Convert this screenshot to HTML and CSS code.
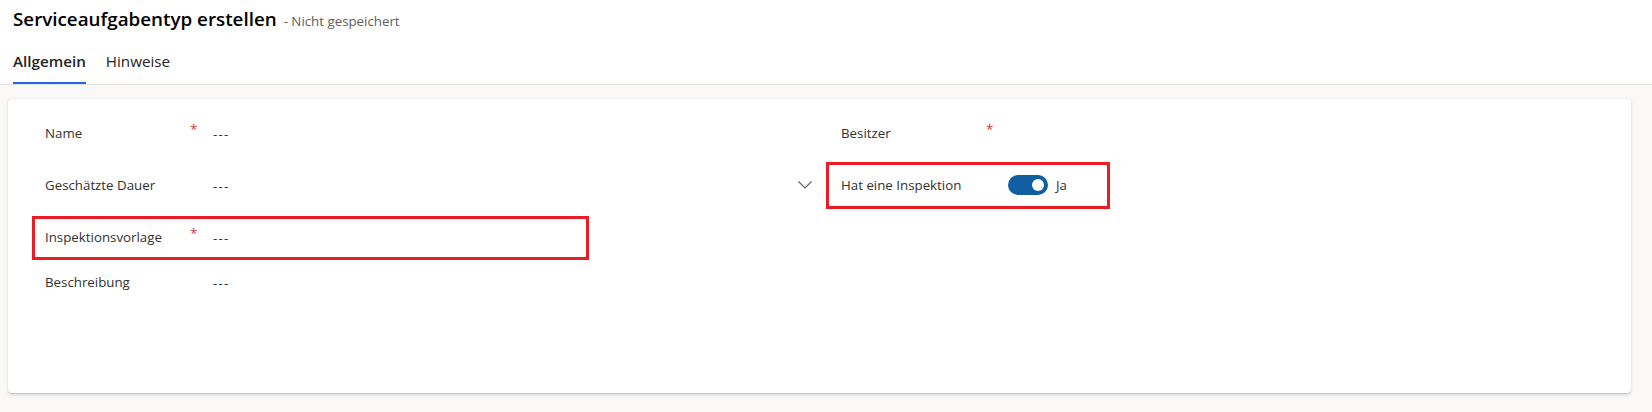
FILE: index.html
```html
<!DOCTYPE html>
<html lang="de">
<head>
<meta charset="utf-8">
<title>Serviceaufgabentyp erstellen</title>
<link rel="stylesheet" href="styles.css">
</head>
<body>
<header class="header">
  <div class="title-row">
    <h1 class="title">Serviceaufgabentyp erstellen</h1>
    <span class="status">- Nicht gespeichert</span>
  </div>
  <nav class="tabs">
    <a class="tab tab--active">Allgemein</a>
    <a class="tab">Hinweise</a>
  </nav>
</header>
<main class="content">
  <section class="card">
    <div class="col">
      <div class="field">
        <span class="label">Name</span>
        <span class="req">*</span>
        <span class="value">---</span>
      </div>
      <div class="field">
        <span class="label">Geschätzte Dauer</span>
        <span class="req"></span>
        <span class="value">---</span>
        <svg class="chevron" width="14" height="8" viewBox="0 0 14 8"><polyline points="0.5,0.5 7,7 13.5,0.5" fill="none" stroke="#605e5c" stroke-width="1.1"/></svg>
      </div>
      <div class="field field--mark-left">
        <span class="label">Inspektionsvorlage</span>
        <span class="req">*</span>
        <span class="value">---</span>
      </div>
      <div class="field field--compact">
        <span class="label">Beschreibung</span>
        <span class="req"></span>
        <span class="value">---</span>
      </div>
    </div>
    <div class="col">
      <div class="field">
        <span class="label">Besitzer</span>
        <span class="req">*</span>
        <span class="value"></span>
      </div>
      <div class="field field--mark-right">
        <span class="label">Hat eine Inspektion</span>
        <span class="req"></span>
        <span class="toggle"><span class="knob"></span></span>
        <span class="toggle-text">Ja</span>
      </div>
    </div>
  </section>
</main>
</body>
</html>
```

FILE: styles.css
```css
*, *::before, *::after { box-sizing: border-box; }
html, body { margin: 0; padding: 0; }
body {
  width: 1652px;
  height: 412px;
  overflow: hidden;
  background: #faf9f8;
  font-family: "Open Sans", "Noto Sans", sans-serif;
  color: #323130;
}
.header {
  background: #fff;
  border-bottom: 1px solid #e0e0e0;
  padding: 0 13px;
  height: 85px;
}
.title-row {
  display: flex;
  align-items: baseline;
  gap: 7px;
  height: 40px;
  padding-top: 5px;
}
.title {
  margin: 0;
  font-size: 18.8px;
  line-height: 28px;
  font-weight: 600;
  color: #000;
}
.status {
  font-size: 13.3px;
  color: #605e5c;
}
.tabs {
  display: flex;
  gap: 20px;
  height: 44px;
}
.tab {
  position: relative;
  padding-top: 11px;
  font-size: 15.2px;
  line-height: 20px;
  color: #242424;
}
.tab--active {
  font-weight: 600;
}
.tab--active::after {
  content: "";
  position: absolute;
  left: 0;
  right: 0;
  bottom: 0;
  height: 2px;
  background: #2266e3;
}
.content {
  padding: 14px 21px 19px 8px;
}
.card {
  background: #fff;
  border-radius: 4px;
  box-shadow: 0 1.6px 3.6px rgba(0,0,0,0.13), 0 0.3px 0.9px rgba(0,0,0,0.11);
  height: 294px;
  padding: 8px 0 0 37px;
  display: grid;
  grid-template-columns: 771px 1fr;
  column-gap: 25px;
  align-content: start;
}
.field {
  position: relative;
  display: flex;
  align-items: center;
  height: 52px;
  font-size: 13.3px;
}
.field--compact { height: 38px; }
.label {
  width: 145px;
  flex: none;
}
.req {
  width: 22px;
  flex: none;
  color: #d13438;
  position: relative;
  top: -4px;
}
.value {
  flex: 1;
  position: relative;
  top: 1px;
  padding-left: 1px;
  letter-spacing: 1.2px;
  color: #323130;
}
.chevron {
  margin-right: 4px;
  flex: none;
}
.toggle {
  width: 40px;
  height: 20px;
  border-radius: 10px;
  background: #115ea3;
  display: flex;
  align-items: center;
  justify-content: flex-end;
  padding-right: 4px;
}
.knob {
  width: 12px;
  height: 12px;
  border-radius: 50%;
  background: #fff;
}
.toggle-text {
  margin-left: 8px;
}
.field--mark-left::after,
.field--mark-right::after {
  content: "";
  position: absolute;
  border: 3px solid #ed1c24;
}
.field--mark-left::after {
  left: -13px;
  width: 557px;
  top: 5px;
  height: 44px;
}
.field--mark-right::after {
  left: -15px;
  width: 284px;
  top: 3px;
  height: 47px;
}
```
